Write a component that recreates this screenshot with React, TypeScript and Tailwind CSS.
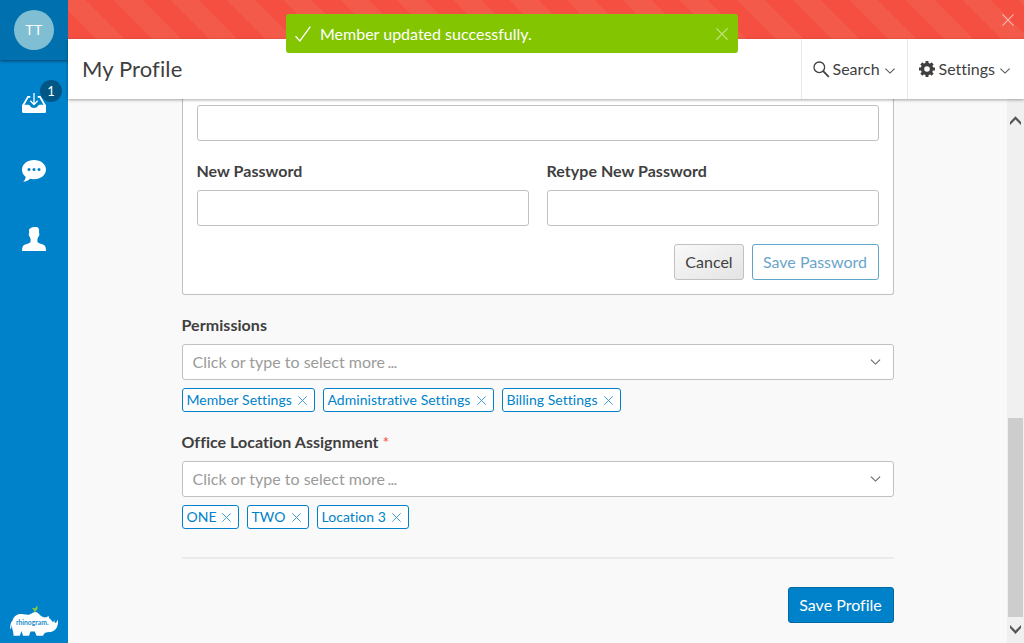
import React from "react";

const Cross = ({ className }: { className: string }) => (
  <svg className={className} viewBox="0 0 12 12" fill="none" stroke="currentColor" strokeWidth="1.2">
    <path d="M.4.4l11.2 11.2M11.6.4L.4 11.6" />
  </svg>
);

const Chevron = ({ className }: { className: string }) => (
  <svg className={className} viewBox="0 0 10 6" fill="none" stroke="currentColor" strokeWidth="1.1">
    <path d="M.4.6L5 5.1 9.6.6" />
  </svg>
);

const Tag = ({ label, width }: { label: string; width: string }) => (
  <span
    className={`flex h-6 items-center justify-between rounded-[3px] border border-[#0082ca] bg-white pl-[3.5px] pr-[7px] text-[14px] leading-5 tracking-[0.04px] whitespace-nowrap text-[#0082ca] ${width}`}
  >
    {label}
    <Cross className="size-[9px] text-[#2f96d1]" />
  </span>
);

const Select = () => (
  <div className="flex h-9 items-center justify-between rounded-[3px] border border-[#c1c1c1] bg-white pl-[9.500px] pr-3 text-[#9b9b9b]">
    <span>
      Click or type to select more <span className="-ml-[1.5px] tracking-[-0.8px]">...</span>
    </span>
    <Chevron className="h-[6px] w-[11px] text-[#666]" />
  </div>
);

const Field = ({ label }: { label: string }) => (
  <div className="flex-1">
    <div className="mb-[7px] -ml-[0.5px] h-6 font-bold leading-6 tracking-[0.04px]">{label}</div>
    <div className="h-9 rounded-[3px] border border-[#c1c1c1] bg-white" />
  </div>
);

const Sidebar = () => (
  <aside className="flex w-[68px] shrink-0 flex-col items-center bg-[#0082ca] text-white">
    <div className="flex h-[60px] w-full shrink-0 items-center justify-center bg-[#0070af] shadow-[0_1px_3px_rgba(0,0,0,0.5)]">
      <div className="flex size-10 items-center justify-center rounded-full bg-[#80bfd3] text-[14px] tracking-[0.6px]">TT</div>
    </div>
    <div className="relative mt-[33px] h-5 w-6">
      <svg className="h-5 w-6" viewBox="0 0 24 20" fill="none">
        <path d="M0 11.800h6.500q1.300 0 1.800 1.500.7 1.700 3.700 1.700t3.700-1.700q.5-1.500 1.800-1.500H24v6.700q0 1.500-1.500 1.500h-21Q0 20 0 18.500z" fill="#fff" />
        <path d="M8.300 3.800H6L1.200 12.300M15.700 3.800H18l4.800 8.500" stroke="#fff" strokeWidth="1.800" />
        <path d="M12 0v11M8.300 7.800L12 11.500l3.700-3.700" stroke="#fff" strokeWidth="1.300" />
      </svg>
      <span className="absolute -top-[13px] left-[18px] flex size-[22px] items-center justify-center rounded-full bg-[#005685] text-[13px]">
        1
      </span>
    </div>
    <svg className="mt-[47px] h-[22px] w-6" viewBox="0 0 24 22">
      <path
        d="M12 0C5.200 0 0 4.200 0 9.600c0 3.100 1.300 5.500 3.600 7.200.1 2-.9 3.800-2.500 4.900 3-.1 5.200-1.100 6.800-2.900 1.300.3 2.600.5 4.100.5 6.800 0 12-4.200 12-9.700S18.800 0 12 0z"
        fill="#fff"
      />
      <g fill="#0082ca">
        <circle cx="7" cy="9.500" r="1.500" />
        <circle cx="12" cy="9.500" r="1.500" />
        <circle cx="17" cy="9.500" r="1.500" />
      </g>
    </svg>
    <svg className="mt-[45px] h-6 w-6" viewBox="0 0 24 24">
      <path
        d="M8.200 1.500Q9.300 0 12 0h3q2 .3 2.100 3.300l-.1 2.700q.7.400.3 2-.3 1.600-1 1.800l-.9 2.500v2.200q.4 1.300 2.400 2l3.700 1.300Q24 18.800 24 24H0q0-5.200 2.500-6.200l3.700-1.300q2-.7 2.400-2v-2.200L7.800 9.800Q7 9.600 6.800 8q-.3-1.600.4-2L7 3.300Q6.900 1.800 8.200 1.500z"
        fill="#fff"
      />
    </svg>
    <svg className="mt-auto mb-[6px] h-[33px] w-[50px]" viewBox="0 0 50 33">
      <path
        d="M3.500 16.500C5 11.500 9 9.800 13 10c3 .2 5 1.200 7.500.4C23 9.500 24.500 8 26.500 8c2.500 0 4 3 6.500 4.500 1.500 1 3 1 4.500.7l2-1.200.8 2.300C42 15.500 43 17 44 18.500l1.200-2.300.8 3C47.500 18.500 48.300 17 48.800 15.500 50 21 47 27.500 41.500 28c-4 .3-5.500.5-6.500 2l-1 1.800h-6.500l-1.700-4.300h-4.300L20 31.800h-6L12.500 27l-1.700 4.800H4.500C4.700 28 3 25.500 2.700 20.500 2.500 23 2.300 25 1.300 25.300.9 22 1.500 18.500 3.500 16.500z"
        fill="#fff"
      />
      <path d="M23 4l3.200.2L28.200 1.500l.3 2.800q-.2 2.200-2 2.500v1.400h-1.300L25 6.500z" fill="#8cc63f" />
      <text
        x="7"
        y="21"
        fontSize="7.500"
        fontWeight="700"
        textLength="32.500"
        lengthAdjust="spacingAndGlyphs"
        fill="#1c8ccd"
        fontFamily="Lato, sans-serif"
      >
        rhinogram.
      </text>
    </svg>
  </aside>
);

export default function App() {
  return (
    <div className="relative flex h-[643px] w-[1024px] overflow-hidden bg-[#f9f9f9] font-['Lato',sans-serif] text-[16px] leading-6 text-[#3f3f3f] [font-variant-ligatures:none]">
      <Sidebar />
      <div className="flex min-w-0 flex-1 flex-col">
        <div className="flex h-[39px] shrink-0 items-center justify-end bg-[repeating-linear-gradient(45deg,#f44f40,#f44f40_20px,#f45a4a_20px,#f45a4a_40px)] pr-[10px]">
          <Cross className="size-3 text-[#fbb5ae]" />
        </div>
        <header className="z-10 flex h-[60px] shrink-0 bg-white shadow-[0_1px_3px_rgba(0,0,0,0.35)]">
          <h1 className="flex flex-1 items-center pl-[14px] text-[22px] tracking-[0.12px]">My Profile</h1>
          <button className="flex w-[106px] items-center border-l border-[#e8e8e8] pl-[11px]">
            <svg className="mr-[2.5px] size-[17px]" viewBox="0 0 17 17" fill="none" stroke="currentColor">
              <circle cx="6.300" cy="6.300" r="5.300" strokeWidth="1.300" />
              <path d="M10.200 10.200l5.600 5.600" strokeWidth="1.800" />
            </svg>
            Search
            <Chevron className="mt-[3px] ml-[5px] h-[6px] w-[10px] text-[#555]" />
          </button>
          <button className="flex w-[117px] items-center border-l border-[#e8e8e8] pl-[11px]">
            <svg className="mr-[3.5px] size-4" viewBox="0 0 16 16" fill="none" stroke="currentColor">
              <circle cx="8" cy="8" r="4.500" strokeWidth="3.400" />
              <path
                d="M8 0v3M8 13v3M0 8h3M13 8h3M2.350 2.350l2 2M11.650 11.650l2 2M2.350 13.650l2-2M11.650 4.350l2-2"
                strokeWidth="3"
              />
            </svg>
            Settings
            <Chevron className="mt-[3px] ml-[5px] h-[6px] w-[10px] text-[#555]" />
          </button>
        </header>
        <div className="flex min-h-0 flex-1">
          <main className="flex-1 pl-[114px]">
            <div className="w-[712px]">
              <section className="h-[196px] rounded-b-[3px] border border-t-0 border-[#c1c1c1] bg-white px-[14px] pt-[6px]">
                <div className="h-9 rounded-[3px] border border-[#c1c1c1]" />
                <div className="mt-[18px] flex gap-[18px]">
                  <Field label="New Password" />
                  <Field label="Retype New Password" />
                </div>
                <div className="mt-[18px] flex justify-end gap-2">
                  <button className="h-9 w-[70px] rounded-[3px] border border-[#c1c1c1] bg-linear-to-br from-[#f9f9f9] to-[#e4e4e4]">
                    Cancel
                  </button>
                  <button className="h-9 w-[127px] rounded-[3px] border border-[#5fa5c9] pr-px text-[#6aa5ca]">Save Password</button>
                </div>
              </section>
              <div className="mt-[18px] mb-[7px] -ml-[0.5px] font-bold tracking-[0.06px]">Permissions</div>
              <Select />
              <div className="mt-2 flex gap-2">
                <Tag label="Member Settings" width="w-[133px]" />
                <Tag label="Administrative Settings" width="w-[171px]" />
                <Tag label="Billing Settings" width="w-[119px]" />
              </div>
              <div className="mt-[18px] mb-[7px] -ml-[0.5px] font-bold tracking-[0.03px]">
                Office Location Assignment <span className="font-normal text-[#f44f40]">*</span>
              </div>
              <Select />
              <div className="mt-2 flex gap-2">
                <Tag label="ONE" width="w-[57px]" />
                <Tag label="TWO" width="w-[62px]" />
                <Tag label="Location 3" width="w-[92px]" />
              </div>
              <div className="mt-7 flex justify-end border-t-2 border-[#ebebeb] pt-7">
                <button className="h-9 w-[106px] rounded-[3px] border border-[#0069a5] bg-[#0082ca] pr-px text-white">Save Profile</button>
              </div>
            </div>
          </main>
          <div className="flex w-[17px] flex-col items-center bg-[#f0f0f0] pt-[17px]">
            <svg className="h-[9px] w-[11px]" viewBox="0 0 11 9">
              <path d="M0 6L5.500.300 11 6v3L5.500 3.500 0 9z" fill="#555" />
            </svg>
            <div className="mt-[293px] h-[199px] w-[15px] bg-[#cdcdcd]" />
            <svg className="mt-2 h-[9px] w-[11px]" viewBox="0 0 11 9">
              <path d="M0 0l5.500 5.500L11 0v3L5.500 9 0 3z" fill="#555" />
            </svg>
          </div>
        </div>
      </div>
      <div className="absolute top-[14px] left-[286px] z-20 flex h-[39px] w-[452px] items-center rounded-[3px] bg-[#82c500] pr-[10px] pl-[9px] text-white">
        <svg className="mr-[9px] h-4 w-4" viewBox="0 0 16 16" fill="none" stroke="#fff" strokeWidth="1.300">
          <path d="M.5 10.200L4.900 15 15.300.7" />
        </svg>
        <span className="flex-1 pt-px">Member updated successfully.</span>
        <Cross className="size-3 text-[#c5e48a]" />
      </div>
    </div>
  );
}
